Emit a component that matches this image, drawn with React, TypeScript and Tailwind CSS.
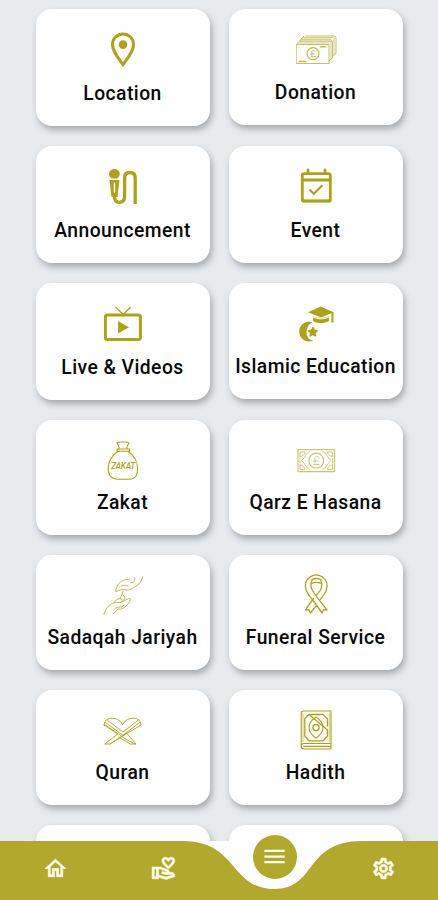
import type { ReactNode } from "react";
import {
  MdMenu,
  MdOutlineHome,
  MdOutlineSettings,
  MdOutlineVolunteerActivism,
} from "react-icons/md";

function Icon({ children, width = 1 }: { children: ReactNode; width?: number }) {
  return (
    <svg
      className="h-11 w-11 shrink-0 text-[#aea21c]"
      viewBox="0 0 44 44"
      fill="none"
      stroke="currentColor"
      strokeWidth={width}
      strokeLinecap="round"
      strokeLinejoin="round"
    >
      {children}
    </svg>
  );
}

const PinIcon = () => (
  <Icon width={3}>
    <path strokeLinejoin="miter" d="M22 37.600C17 31 11.500 24 11.500 17.200a10.500 10.200 0 0 1 21 0C32.500 24 27 31 22 37.600Z" />
    <circle cx="22" cy="17.600" r="4.300" fill="currentColor" stroke="none" />
  </Icon>
);

const CashStackIcon = () => (
  <Icon width={0.9}>
    <g opacity=".75">
      <path d="M12 9h28q2 0 2 2v15.500l-3 3M6.500 12.500 10 9M6.500 13h30q2 0 2 2v15.500L35 34M2.500 17.500 6.500 13" />
      <path d="M9 10.500h30M8 12h29M6 14.500h31M5 16h30M37 14v18M40 11v17" strokeWidth=".7" />
      <rect x="2.600" y="17.500" width="32.400" height="19" />
      <circle cx="19" cy="26.700" r="6" strokeWidth="1.200" />
      <path d="M21 24.200c-2.800-1.800-3.800.6-3.200 2.200.4 1.400 0 2.300-.8 3.200h4.500M16.500 27h3.500" />
      <path d="M26.500 19.800h5M5 34.500h7" strokeWidth="1.400" />
    </g>
  </Icon>
);

const MicIcon = () => (
  <Icon width={3.300}>
    <path fill="currentColor" stroke="none" d="M8 9.800a5.400 4.800 0 0 1 10.800 0c0 2.200-1.300 4.200-3 4.600h-4.800c-1.700-.4-3-2.400-3-4.600Z" />
    <path fill="currentColor" stroke="none" d="M8.500 16h10l-2 17h-6Z" />
    <path d="M13.500 19v9" stroke="white" strokeWidth="1.400" />
    <path strokeLinecap="butt" d="M13.300 31.500c0 4.700 1.800 6.800 5 6.800s5.300-2.200 5.300-6V14c0-3.600 2-5.500 5.200-5.500s5.400 1.900 5.400 5.500V40" />
  </Icon>
);

const CalendarIcon = () => (
  <Icon width={2.8}>
    <rect x="8.300" y="9.700" width="28" height="27.500" rx="1.800" />
    <path d="M8.300 16h28M14 6v3M31 6v3" />
    <path d="M8.500 36.800h27.600" />
    <path strokeWidth="2.200" strokeLinecap="butt" strokeLinejoin="miter" d="m15.500 25.500 4.300 4.200 8.600-8.500" />
  </Icon>
);

const TvIcon = () => (
  <Icon width={3}>
    <rect x="4.400" y="13.900" width="35" height="24.600" rx="2" />
    <path strokeWidth="1.400" d="m15 6.500 7.200 7 7-7" />
    <path fill="currentColor" stroke="none" d="m17 20 11 6.200-11 6.200Z" />
  </Icon>
);

const EducationIcon = () => (
  <Icon>
    <g fill="currentColor" stroke="none">
      <path d="m14 11.200 12.700-5.700 12.800 5.700L27 16.400Z" />
      <path d="M19 15.200c4.300 2.300 11.300 2.300 16 0v4.800c-4.300 2.700-11.800 2.700-16 0Z" />
      <path d="M37.400 11h2.100v10.500h-2.100Z" />
      <path d="M18.500 21.300A9.900 9.900 0 1 0 19.500 39.400c-8.500 0-9.500-14-1-18.100Z" />
    </g>
    <path
      fill="currentColor"
      strokeWidth="1.600"
      d="m18.800 26.700 1.300 2.700 2.900.4-2.100 2 .6 2.900-2.700-1.500-2.500 1.500.5-2.900-2.100-2 2.900-.4Z"
    />
    <path stroke="white" strokeWidth="1" d="M19.500 16.200c4.300 2.200 10.800 2.200 15 0" />
  </Icon>
);

const ZakatIcon = () => (
  <Icon width={1.1}>
    <path d="M18 10.800c.6-2.400-.6-3.600-2-5.800 2-1.500 3.300-.7 6-1 2.700.3 4-.5 6 1-1.400 2.200-2.600 3.400-2 5.800M16 11h12.500v2.200H16ZM17 13.200C11 17.500 7.500 22 7.300 29c-.3 9 3.200 12.200 9.700 12.200h10.500c6.500 0 9.500-3.200 9-12.200-.3-7-3.500-11.500-9.500-15.800" />
    <text
      x="22.200"
      y="31.300"
      textAnchor="middle"
      textLength="24"
      className="font-['Roboto',sans-serif] text-[8.500px] font-medium italic"
      fill="currentColor"
      stroke="white"
      strokeWidth="1.500"
      paintOrder="stroke"
    >
      ZAKAT
    </text>
  </Icon>
);

const BanknoteIcon = () => (
  <Icon width={0.9}>
    <g opacity=".62">
      <rect x="4" y="11.600" width="36.500" height="22" strokeWidth="1.200" />
      <path d="M6 18.500V14h5c0 2.500-2 4.500-5 4.500ZM38.500 18.500V14h-5c0 2.500 2 4.500 5 4.500ZM6 27v4.500h5c0-2.500-2-4.500-5-4.500ZM38.500 27v4.500h-5c0-2.500 2-4.500 5-4.500ZM6 20.500v4.500M38.500 20.500v4.500M15.500 13.500c-4 1.500-4 6-8 9 4 3 4 7.500 8 9M29 13.500c4 1.500 4 6 8 9-4 3-4 7.500-8 9" />
      <circle cx="22.300" cy="22.600" r="7.400" strokeWidth="1.200" />
      <path d="M25 19.500c-2.500-2.500-4.700-.5-4 2 .5 2 .3 4-1.200 5H25M19.500 23H24" />
    </g>
  </Icon>
);

const HandsIcon = () => (
  <Icon width={0.9}>
    <g opacity=".82">
      <path d="M41.700 3.800c-1.200 4.800-3.800 8.200-9 10.700-3 1.600-4.500 2.700-6.200 2.500L21 16.600c-2.600 0-4 1.900-6.200 1.800 0-4.600 3.300-9.100 7-10.900 2-1 4.500-.8 6.500-1.300M30 9.500c3.500.3 4.500-2.700 3.500-5.200M20.500 13c2-1 4.200-1 6.200 0" strokeDasharray="7 .7" />
      <path d="m22 18-1.300 4c-2.500 3.500-.4 5.500 1.200 5.200 2.800-.3 2.300-3 .2-5.200M3 41.500c1.200-5.500 4.300-9.300 8.500-11.300 3.300-1.500 5.500-.7 7.500-.5l7.200-3.500c1.500-1 3.300-1 3.200.6-1.500 3.600-4 6.700-7.400 8.500-1.700 1-3.700.5-5.500 1.200l-4 4.200M14 35.500c3-3 6.200.4 9-3.300M13 30c1.500-3.500 4-4.500 6.200-4.200" strokeDasharray="7 .6" />
    </g>
  </Icon>
);

const RibbonIcon = () => (
  <Icon width={1.3}>
    <path d="M16.500 3.800C11.500 7 10.500 12.500 12.300 17.500c2 5 5.700 8.500 7.200 10.500l8.500 12 1.700-3.300 3.300.3C28 30.500 22 23.500 18.500 17.500c-2.200-4-2-7.500-.3-10.500M28 3.800c5 3.200 6 8.700 4.200 13.700-1.500 3.500-3.500 6.300-5.700 8.700M22.500 22c1.500-1.800 2.700-3 3.700-4.500 2.200-4 2-7.500.3-10.500M19.500 25.500c-3 4-5.500 7.500-8 11.500l3.300-.3L16.500 40l6-7.700" />
    <path d="M16.500 3.800c3.700-2.400 7.800-2.400 11.500 0M17.800 6.500c3-1.300 6-1.300 9 0M17.500 10.500c3-1.400 6.500-1.400 9.700 0" />
  </Icon>
);

const QuranIcon = () => (
  <Icon width={0.9}>
    <path d="M3.200 17c0-3 1.500-5.500 5.500-6.600 6.300-.8 10.500 1.600 12.900 6.300 2.400-4.700 6.600-7.100 12.900-6.300 4 1.100 5.500 3.600 5.500 6.600L21.600 28 9 36H3.800l13-10L3.200 17ZM26.500 26l8.500 10h-5.500L17.500 29" />
    <path d="M4.500 14.500 22 27.300 38.700 14.500M6.500 12.300 22 24l15-11.700M4 16.800 27 32.500 34 36M26 25 9 36" />
  </Icon>
);

const BookIcon = () => (
  <Icon width={1.100}>
    <path d="M37 35.500H10c-2 0-2.800 1-2.800 2.500V5.500C7.200 4 8.200 3 9.700 3H37v38H10c-1.800 0-2.800-1-2.800-3 0-1.400 1-2.500 2.800-2.500M10 38.400h27" />
    <path d="M9 5v29M35.300 5v29" strokeWidth=".6" />
    <path d="M15 6.500h14l4.500 4.500v7M33.500 22v6L29 32.800H15L10.800 28V10.500L15 6.500Z" strokeWidth="1.300" />
    <path d="M22 9C26.500 12 29 15.500 29 19.600C29 23.700 26.500 27.200 22 30.200C17.500 27.200 15 23.700 15 19.600C15 15.500 17.500 12 22 9Z" />
    <circle cx="22" cy="19.600" r="3.100" strokeWidth="1.300" />
  </Icon>
);

interface CardProps {
  label: string;
  icon: ReactNode;
  size: string;
  text: string;
}

function MenuCard({ label, icon, size, text }: CardProps) {
  return (
    <button
      className={`flex w-[174px] flex-col items-center rounded-[16px] bg-white pt-[18px] shadow-[2px_4px_6px_rgba(70,75,80,0.40)] ${size}`}
    >
      {icon}
      <span
        className={`mr-px text-[19.300px] leading-[26px] font-medium tracking-[0.450px] whitespace-nowrap text-[#080808] ${text}`}
      >
        {label}
      </span>
    </button>
  );
}

const tall = "h-[117px]";
const mid = "h-[116px]";
const short = "h-[115px]";

const rows: CardProps[][] = [
  [
    { label: "Location", icon: <PinIcon />, size: tall, text: "mt-2.5" },
    { label: "Donation", icon: <CashStackIcon />, size: mid, text: "mt-[9px]" },
  ],
  [
    { label: "Announcement", icon: <MicIcon />, size: tall, text: "mt-2.5" },
    { label: "Event", icon: <CalendarIcon />, size: tall, text: "mt-2.5" },
  ],
  [
    { label: "Live & Videos", icon: <TvIcon />, size: tall, text: "mt-2.5" },
    { label: "Islamic Education", icon: <EducationIcon />, size: mid, text: "mt-[9px]" },
  ],
  [
    { label: "Zakat", icon: <ZakatIcon />, size: short, text: "mt-2" },
    { label: "Qarz E Hasana", icon: <BanknoteIcon />, size: short, text: "mt-2" },
  ],
  [
    { label: "Sadaqah Jariyah", icon: <HandsIcon />, size: short, text: "mt-2" },
    { label: "Funeral Service", icon: <RibbonIcon />, size: short, text: "mt-2" },
  ],
  [
    { label: "Quran", icon: <QuranIcon />, size: short, text: "mt-2" },
    { label: "Hadith", icon: <BookIcon />, size: short, text: "mt-2" },
  ],
];

export default function App() {
  return (
    <div className="relative h-[900px] w-[438px] overflow-hidden bg-[#e7ebee] font-['Roboto',sans-serif]">
      <main className="flex flex-col gap-5 pt-[9px] pl-9">
        {rows.map((row) => (
          <div key={row[0].label} className="flex items-start gap-[19px]">
            {row.map((card) => (
              <MenuCard key={card.label} {...card} />
            ))}
          </div>
        ))}
        <div className="flex gap-[19px]">
          <div className="h-[115px] w-[174px] rounded-[16px] bg-white shadow-[2px_4px_6px_rgba(70,75,80,0.40)]" />
          <div className="h-[115px] w-[174px] rounded-[16px] bg-white shadow-[2px_4px_6px_rgba(70,75,80,0.40)]" />
        </div>
      </main>

      <nav className="absolute bottom-0 left-0 h-[59px] w-full bg-white text-[#fffde9]">
        <svg className="absolute inset-0 h-[59px] w-[438px]" viewBox="0 0 438 59" fill="#b1a82d">
          <path d="M0 0H184C238 1 230 48 274.500 48C317 48 304 0 362 0H438V59H0Z" />
        </svg>
        <div className="relative flex h-full items-center">
          <button className="mt-[-5px] ml-[42.500px] flex h-[26px] w-[26px] items-center justify-center">
            <MdOutlineHome className="h-[25px] w-[25px] [&>path[fill=none]]:stroke-none" strokeWidth="0.6" stroke="currentColor" />
          </button>
          <button className="mt-[-5px] ml-[82.500px] flex h-[26px] w-[26px] items-center justify-center">
            <MdOutlineVolunteerActivism className="h-[26px] w-[26px] [&>path[fill=none]]:stroke-none [&>rect]:stroke-none" strokeWidth="0.5" stroke="currentColor" />
          </button>
          <button className="mb-[28px] ml-[75.500px] flex h-[44px] w-[44px] items-center justify-center rounded-full bg-[#b1a82d]">
            <MdMenu className="h-[27px] w-[27px] [&>path[fill=none]]:stroke-none" />
          </button>
          <button className="mt-[-5px] ml-[74px] flex h-[26px] w-[26px] items-center justify-center">
            <MdOutlineSettings className="h-[25px] w-[25px] [&>path[fill=none]]:stroke-none" strokeWidth="0.6" stroke="currentColor" />
          </button>
        </div>
      </nav>
    </div>
  );
}
